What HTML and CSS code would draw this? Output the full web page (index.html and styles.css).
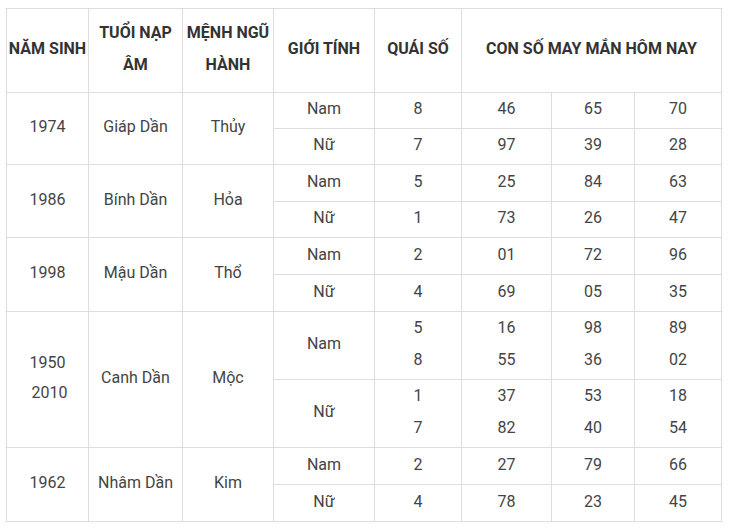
FILE: index.html
```html
<!DOCTYPE html>
<html lang="vi">
<head>
<meta charset="utf-8">
<link rel="stylesheet" href="styles.css">
</head>
<body>
<table class="lucky">
  <colgroup>
    <col class="c1"><col class="c2"><col class="c3"><col class="c4"><col class="c5"><col class="c6"><col class="c7"><col class="c8">
  </colgroup>
  <thead>
    <tr class="head">
      <th>NĂM SINH</th>
      <th>TUỔI NẠP<br>ÂM</th>
      <th>MỆNH NGŨ<br>HÀNH</th>
      <th>GIỚI TÍNH</th>
      <th>QUÁI SỐ</th>
      <th colspan="3">CON SỐ MAY MẮN HÔM NAY</th>
    </tr>
  </thead>
  <tbody>
    <tr class="r36"><td rowspan="2">1974</td><td rowspan="2">Giáp Dần</td><td rowspan="2">Thủy</td><td>Nam</td><td>8</td><td>46</td><td>65</td><td>70</td></tr>
    <tr class="r36"><td>Nữ</td><td>7</td><td>97</td><td>39</td><td>28</td></tr>
    <tr class="r37"><td rowspan="2">1986</td><td rowspan="2">Bính Dần</td><td rowspan="2">Hỏa</td><td>Nam</td><td>5</td><td>25</td><td>84</td><td>63</td></tr>
    <tr class="r36"><td>Nữ</td><td>1</td><td>73</td><td>26</td><td>47</td></tr>
    <tr class="r37"><td rowspan="2">1998</td><td rowspan="2">Mậu Dần</td><td rowspan="2">Thổ</td><td>Nam</td><td>2</td><td>01</td><td>72</td><td>96</td></tr>
    <tr class="r37"><td>Nữ</td><td>4</td><td>69</td><td>05</td><td>35</td></tr>
    <tr class="r67"><td rowspan="2" class="years">1950<br>&nbsp;2010</td><td rowspan="2">Canh Dần</td><td rowspan="2">Mộc</td><td>Nam</td><td class="multi">5<br>8</td><td class="multi">16<br>55</td><td class="multi">98<br>36</td><td class="multi">89<br>02</td></tr>
    <tr class="r68"><td>Nữ</td><td class="multi">1<br>7</td><td class="multi">37<br>82</td><td class="multi">53<br>40</td><td class="multi">18<br>54</td></tr>
    <tr class="r37"><td rowspan="2">1962</td><td rowspan="2">Nhâm Dần</td><td rowspan="2">Kim</td><td>Nam</td><td>2</td><td>27</td><td>79</td><td>66</td></tr>
    <tr class="r37"><td>Nữ</td><td>4</td><td>78</td><td>23</td><td>45</td></tr>
  </tbody>
</table>
</body>
</html>
```
FILE: styles.css
```css
html, body {
  margin: 0;
  padding: 0;
  background: #ffffff;
}
body {
  padding: 8px 0 0 6px;
  font-family: Roboto, "Liberation Sans", Arial, sans-serif;
  color: #333333;
  font-size: 16px;
}
.lucky {
  border-collapse: collapse;
  table-layout: fixed;
  width: 715px;
}
.c1 { width: 82px; }
.c2 { width: 94px; }
.c3 { width: 91px; }
.c4 { width: 101px; }
.c5 { width: 87px; }
.c6 { width: 90px; }
.c7 { width: 83px; }
.c8 { width: 87px; }
.lucky th,
.lucky td {
  border: 1px solid #dddddd;
  text-align: center;
  vertical-align: middle;
  padding: 0 0 3px 0;
}
.lucky th {
  font-weight: bold;
  line-height: 32px;
  color: #333333;
}
.head { height: 84px; }
.lucky td { line-height: 24px; color: #444444; }
.r36 { height: 36px; }
.r37 { height: 37px; }
.r67 { height: 67px; }
.r68 { height: 68px; }
.lucky td.multi { line-height: 32px; }
.lucky td.years { line-height: 30px; }
```
